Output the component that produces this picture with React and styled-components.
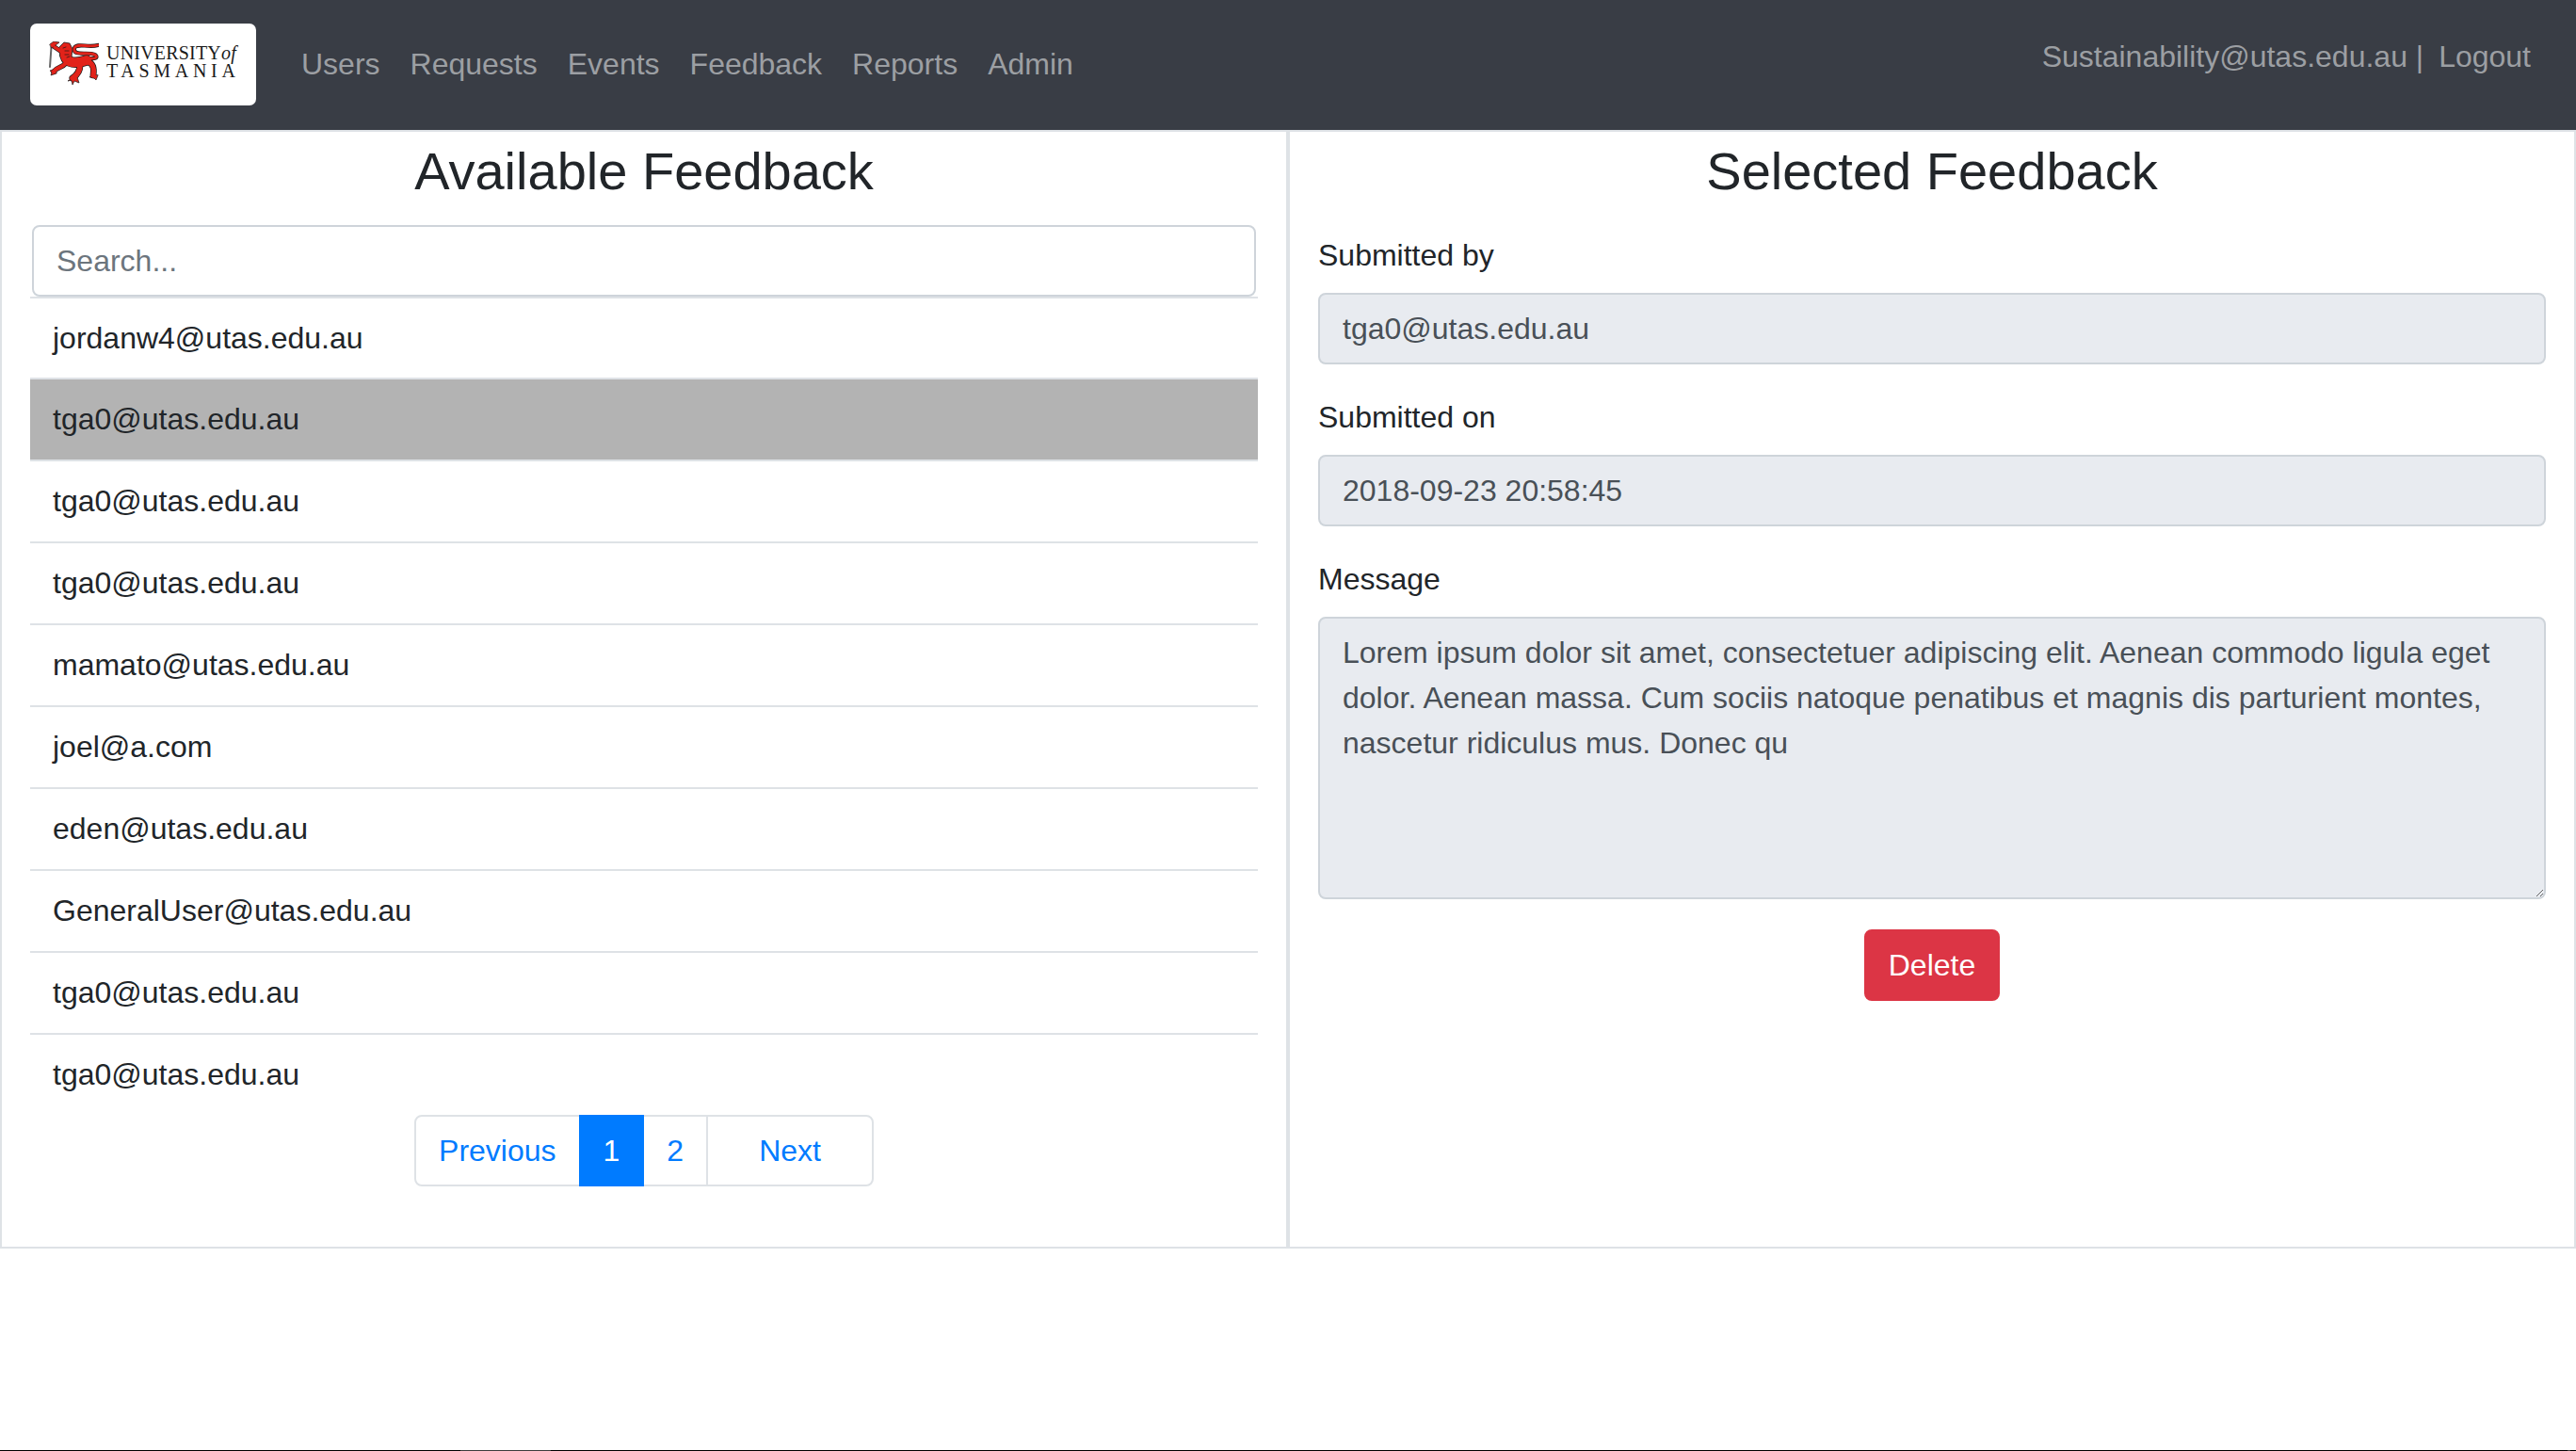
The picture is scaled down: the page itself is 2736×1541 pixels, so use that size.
import styled, { createGlobalStyle } from 'styled-components'

const GlobalStyle = createGlobalStyle`
  * {
    box-sizing: border-box;
  }
  body {
    margin: 0;
    background: #fff;
    color: #212529;
    font-family: "Liberation Sans", Arial, sans-serif;
    font-size: 32px;
    line-height: 48px;
  }
`

const Page = styled.div`
  min-height: 100vh;
  display: flex;
  flex-direction: column;
`

const Navbar = styled.nav`
  height: 138px;
  flex: none;
  display: flex;
  align-items: center;
  padding: 0 32px;
  background: #393d45;
`

const Brand = styled.a`
  width: 240px;
  height: 87px;
  margin: 0 32px 1px 0;
  display: flex;
  align-items: center;
  gap: 8px;
  padding: 0 0 2px 20px;
  background: #fff;
  border-radius: 7px;
`

const Wordmark = styled.div`
  display: flex;
  flex-direction: column;
  margin-bottom: 4px;
  font-family: "Liberation Serif", "Times New Roman", serif;
  color: #1a1a1a;
  font-size: 20px;
  line-height: 19px;
`

const WordLine = styled.span`
  white-space: nowrap;
  letter-spacing: ${({ $wide }) => ($wide ? '4.7px' : '0.2px')};
`

const Of = styled.i`
  font-size: 20px;
`

const NavLinks = styled.div`
  display: flex;
  flex: 1;
  padding-bottom: 2px;
`

const NavLink = styled.a`
  padding: 0 16px;
  color: #9c9fa3;
`

const UserNav = styled.div`
  display: flex;
  padding: 0 16px 18px 0;
  color: #9c9fa3;
  white-space: pre;
`

const Logout = styled.a`
  margin-left: 16px;
`

const Columns = styled.main`
  height: 1188px;
  flex: none;
  display: grid;
  grid-template-columns: 1fr 1fr;
`

const Column = styled.section`
  border: 2px solid #dee2e6;
  padding: 8px 30px 0;
  display: flex;
  flex-direction: column;
`

const Heading = styled.h3`
  margin: 0 0 16px;
  font-size: 56px;
  line-height: 67px;
  font-weight: 400;
  text-align: center;
`

const SearchInput = styled.input`
  display: block;
  width: calc(100% - 4px);
  height: 76px;
  margin: 8px 2px 0;
  padding: 12px 24px;
  border: 2px solid #ced4da;
  border-radius: 8px;
  font: inherit;
  color: #495057;
  outline: none;

  &::placeholder {
    color: #6c757d;
    opacity: 1;
  }
`

const List = styled.ul`
  margin: 0;
  padding: 0;
  list-style: none;
  border-top: 2px solid #dee2e6;
`

const Row = styled.li`
  height: 87px;
  padding: 18px 24px 0;
  border-bottom: 2px solid #dee2e6;
  background: ${({ $selected }) => ($selected ? '#b3b3b3' : 'transparent')};

  &:first-child {
    height: 86px;
  }
  &:last-child {
    height: 85px;
    border-bottom: 0;
  }
`

const Pagination = styled.div`
  display: flex;
  justify-content: center;
  padding-left: 2px;
`

const PageLink = styled.a`
  height: 76px;
  padding: 12px ${({ $wide }) => ($wide ? '54px' : '24px')};
  margin-left: -2px;
  border: 2px solid ${({ $active }) => ($active ? '#007bff' : '#dee2e6')};
  background: ${({ $active }) => ($active ? '#007bff' : '#fff')};
  color: ${({ $active }) => ($active ? '#fff' : '#007bff')};
  position: relative;
  z-index: ${({ $active }) => ($active ? 1 : 0)};

  &:first-child {
    border-radius: 8px 0 0 8px;
  }
  &:last-child {
    border-radius: 0 8px 8px 0;
  }
`

const Form = styled.form`
  margin-top: 16px;
  display: flex;
  flex-direction: column;
`

const Field = styled.div`
  margin-bottom: 32px;
`

const Label = styled.label`
  display: block;
  margin-bottom: 16px;
`

const ReadOnlyInput = styled.input`
  display: block;
  width: 100%;
  height: 76px;
  padding: 12px 24px;
  border: 2px solid #ced4da;
  border-radius: 8px;
  background: #e8ebf0;
  color: #495057;
  font: inherit;
  outline: none;
`

const MessageBox = styled.textarea`
  display: block;
  width: 100%;
  height: 300px;
  padding: 12px 24px;
  border: 2px solid #ced4da;
  border-radius: 8px;
  background: #e8ebf0;
  color: #495057;
  font: inherit;
  outline: none;
`

const DeleteButton = styled.button`
  align-self: center;
  height: 76px;
  padding: 12px 24px;
  border: 2px solid #dc3545;
  border-radius: 8px;
  background: #dc3545;
  color: #fff;
  font: inherit;
`

const BottomEdge = styled.div`
  margin-top: auto;
  height: 1px;
  flex: none;
  background: #000;
  display: flex;
  justify-content: space-between;
  padding: 0 6px 0 489px;
`

const EdgeMark = styled.span`
  width: ${({ $w }) => $w}px;
  background: #3c3c3c;
`

const RED = '#e2231a'
const INK = '#1a1a1a'

const limbs = [
  ['M17 15C19 23 28 24 40 20', 10],
  ['M15 12C12 10 9 8 6 6', 3.6],
  ['M18 23C14 28 9 27 5 32', 4.2],
  ['M41 21C48 24 48 30 47 36', 5.4],
  ['M33 25C33 31 31 35 25 39', 5.6],
  ['M44 18C53 19 52 14 45 13C37 12 25 15 27 7C30 1 41 7 52 4', 2.8],
]

const Lion = () => (
  <svg width="53" height="47" viewBox="0 0 53 47" fill="none" strokeLinecap="round">
    <path d="M2.5 6L1 27" stroke="#666" strokeWidth="2" />
    {limbs.map(([d, w]) => (
      <path key={d} d={d} stroke={INK} strokeWidth={w + 1.4} />
    ))}
    <path d="M11 6L16 1L22 2L25 8L24 16L19 21L12 16Z" fill={RED} stroke={INK} strokeWidth="0.8" />
    <path d="M1 3L5 0L11 1L7 4L3 7Z" fill={RED} stroke={INK} strokeWidth="0.7" />
    <path d="M26 38L20 42L24 41L25 46L27 42L32 44L30 38Z" fill={RED} stroke={INK} strokeWidth="0.7" />
    <path d="M46 35L43 38L47 38L50 41L52 36Z" fill={RED} stroke={INK} strokeWidth="0.7" />
    <path d="M5 30L1 31L3 33L2 36L8 34Z" fill={RED} stroke={INK} strokeWidth="0.7" />
    {limbs.map(([d, w]) => (
      <path key={d} d={d} stroke={RED} strokeWidth={w} />
    ))}
    <path d="M15 7L18 6M17 10L21 10M17 14L21 14M19 17L22 16" stroke={INK} strokeWidth="0.7" />
  </svg>
)

const emails = [
  'jordanw4@utas.edu.au',
  'tga0@utas.edu.au',
  'tga0@utas.edu.au',
  'tga0@utas.edu.au',
  'mamato@utas.edu.au',
  'joel@a.com',
  'eden@utas.edu.au',
  'GeneralUser@utas.edu.au',
  'tga0@utas.edu.au',
  'tga0@utas.edu.au',
]

const message =
  'Lorem ipsum dolor sit amet, consectetuer adipiscing elit. Aenean commodo ligula eget dolor. Aenean massa. Cum sociis natoque penatibus et magnis dis parturient montes, nascetur ridiculus mus. Donec qu'

function App() {
  return (
    <Page>
      <GlobalStyle />
      <Navbar>
        <Brand>
          <Lion />
          <Wordmark>
            <WordLine>UNIVERSITY<Of>of</Of></WordLine>
            <WordLine $wide>TASMANIA</WordLine>
          </Wordmark>
        </Brand>
        <NavLinks>
          <NavLink>Users</NavLink>
          <NavLink>Requests</NavLink>
          <NavLink>Events</NavLink>
          <NavLink>Feedback</NavLink>
          <NavLink>Reports</NavLink>
          <NavLink>Admin</NavLink>
        </NavLinks>
        <UserNav>
          Sustainability@utas.edu.au |<Logout>Logout</Logout>
        </UserNav>
      </Navbar>
      <Columns>
        <Column>
          <Heading>Available Feedback</Heading>
          <SearchInput placeholder="Search..." />
          <List>
            {emails.map((email, i) => (
              <Row key={i} $selected={i === 1}>{email}</Row>
            ))}
          </List>
          <Pagination>
            <PageLink>Previous</PageLink>
            <PageLink $active>1</PageLink>
            <PageLink>2</PageLink>
            <PageLink $wide>Next</PageLink>
          </Pagination>
        </Column>
        <Column>
          <Heading>Selected Feedback</Heading>
          <Form>
            <Field>
              <Label>Submitted by</Label>
              <ReadOnlyInput readOnly value="tga0@utas.edu.au" />
            </Field>
            <Field>
              <Label>Submitted on</Label>
              <ReadOnlyInput readOnly value="2018-09-23 20:58:45" />
            </Field>
            <Field>
              <Label>Message</Label>
              <MessageBox readOnly value={message} />
            </Field>
            <DeleteButton type="button">Delete</DeleteButton>
          </Form>
        </Column>
      </Columns>
      <BottomEdge>
        <EdgeMark $w={96} />
        <EdgeMark $w={3} />
      </BottomEdge>
    </Page>
  )
}

export default App
